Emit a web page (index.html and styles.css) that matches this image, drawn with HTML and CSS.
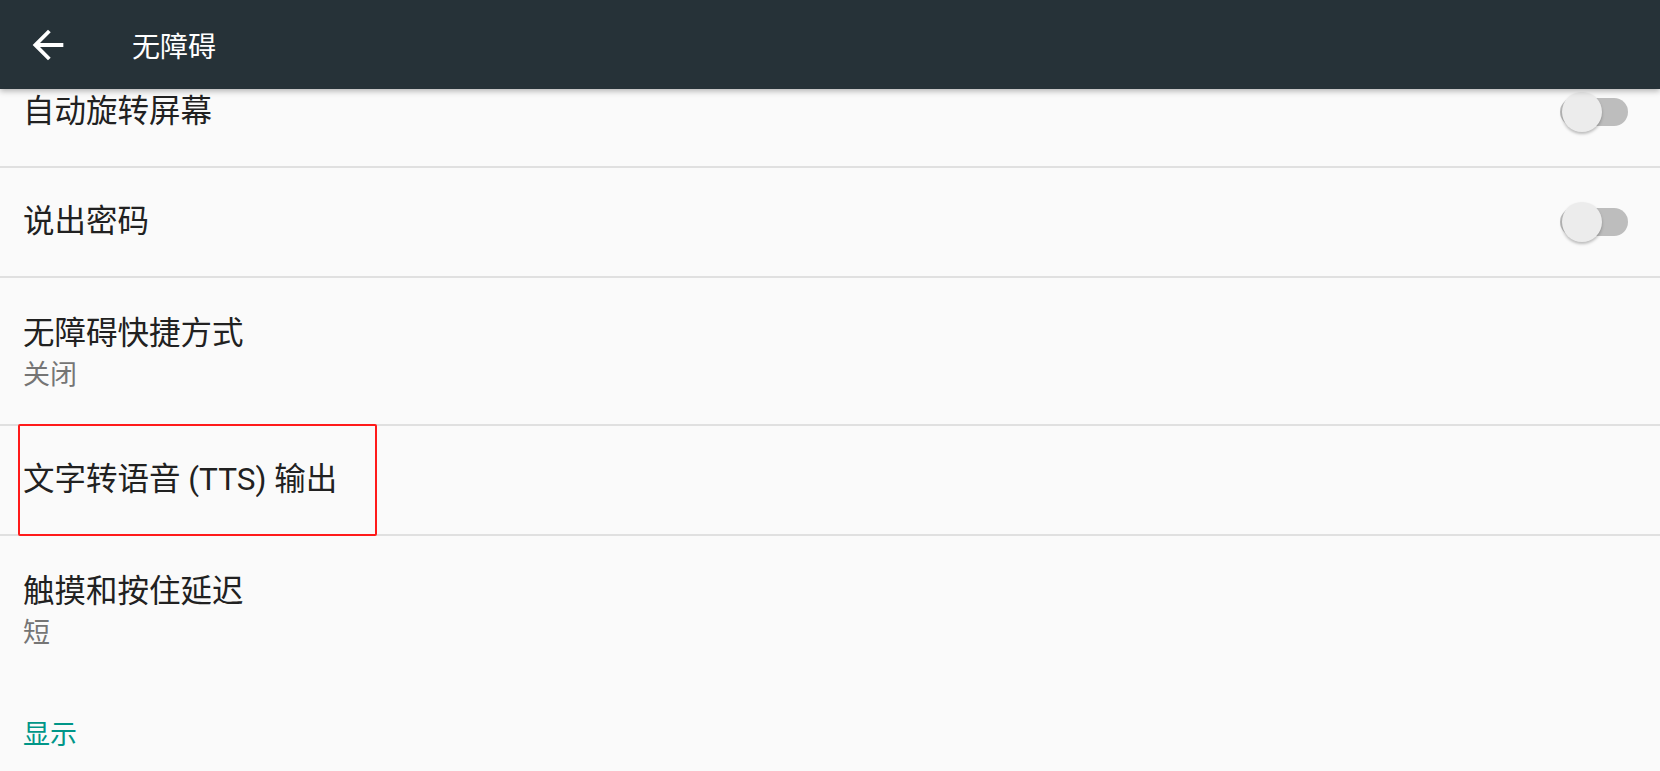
FILE: index.html
```html
<!DOCTYPE html>
<html lang="zh-CN">
<head>
<meta charset="UTF-8">
<meta name="viewport" content="width=device-width, initial-scale=1.0">
<title>无障碍</title>
<link rel="stylesheet" href="styles.css">
</head>
<body>
  <header class="toolbar">
    <button class="back-btn" aria-label="返回">
      <svg xmlns="http://www.w3.org/2000/svg" width="46" height="46" viewBox="0 0 24 24" fill="currentColor">
        <path d="M20 11H7.83l5.59-5.59L12 4l-8 8 8 8 1.41-1.41L7.83 13H20v-2z"></path>
      </svg>
    </button>
    <h1 class="toolbar-title">无障碍</h1>
  </header>

  <main class="content">
    <div class="pref-list">
      <div class="pref-item">
        <div class="pref-text">
          <p class="pref-title">自动旋转屏幕</p>
        </div>
        <span class="switch"><span class="switch-thumb"></span></span>
      </div>

      <div class="pref-item">
        <div class="pref-text">
          <p class="pref-title">说出密码</p>
        </div>
        <span class="switch"><span class="switch-thumb"></span></span>
      </div>

      <div class="pref-item two-line">
        <div class="pref-text">
          <p class="pref-title">无障碍快捷方式</p>
          <p class="pref-summary">关闭</p>
        </div>
      </div>

      <div class="pref-item highlighted">
        <div class="pref-text">
          <p class="pref-title">文字转语音 (TTS) 输出</p>
        </div>
        <span class="mark-box"></span>
      </div>

      <div class="pref-item two-line no-divider">
        <div class="pref-text">
          <p class="pref-title">触摸和按住延迟</p>
          <p class="pref-summary">短</p>
        </div>
      </div>

      <div class="pref-category">显示</div>
    </div>
  </main>
</body>
</html>
```

FILE: styles.css
```css
:root {
  --toolbar-color: #263238;
  --page-bg: #fafafa;
  --text-primary: #212121;
  --text-secondary: #757575;
  --divider-color: #e0e0e0;
  --accent-color: #009688;
}

* {
  box-sizing: border-box;
}

html,
body {
  margin: 0;
  height: 100%;
}

body {
  background-color: var(--page-bg);
  font-family: Roboto, "Noto Sans CJK SC", sans-serif;
  color: var(--text-primary);
  overflow: hidden;
}

.toolbar {
  position: relative;
  z-index: 2;
  display: flex;
  align-items: center;
  height: 89px;
  background-color: var(--toolbar-color);
  color: white;
  box-shadow: 0 2px 6px rgba(0, 0, 0, 0.3);
}

.back-btn {
  display: flex;
  align-items: center;
  justify-content: center;
  width: 64px;
  height: 64px;
  margin-left: 16px;
  padding: 0;
  border: none;
  background: none;
  color: white;
}

.toolbar-title {
  margin: 0 0 0 52px;
  font-size: 28px;
  font-weight: normal;
}

/* 列表已向上滚动了一部分 */
.content {
  position: relative;
  z-index: 1;
  height: calc(100% - 89px);
  overflow: hidden;
}

.pref-list {
  margin-top: -31px;
}

.pref-item {
  position: relative;
  display: flex;
  align-items: center;
  min-height: 110px;
  padding: 0 22px 0 23px;
  border-bottom: 2px solid var(--divider-color);
}

.pref-item.two-line {
  min-height: 148px;
  padding-top: 36px;
  padding-bottom: 28px;
  align-items: flex-start;
}

.pref-item.no-divider {
  border-bottom: none;
}

.pref-text {
  flex: 1;
}

.pref-title {
  margin: 0;
  font-size: 31.5px;
  line-height: 40px;
}

.pref-summary {
  margin: 0;
  font-size: 27px;
  line-height: 42px;
  color: var(--text-secondary);
}

.switch {
  position: relative;
  width: 68px;
  height: 28px;
  margin-right: 10px;
  border-radius: 14px;
  background-color: #bdbdbd;
}

.switch-thumb {
  position: absolute;
  top: -6px;
  left: 2px;
  width: 40px;
  height: 40px;
  border-radius: 50%;
  background-color: #ececec;
  box-shadow: 0 2px 3px rgba(0, 0, 0, 0.25);
}

/* 红色标注框 */
.mark-box {
  position: absolute;
  left: 18px;
  top: -2px;
  width: 359px;
  height: 112px;
  border: 2px solid #ff1a1a;
  border-radius: 2px;
}

.pref-category {
  padding: 33px 23px 0;
  font-size: 27px;
  line-height: 36px;
  color: var(--accent-color);
}
```
